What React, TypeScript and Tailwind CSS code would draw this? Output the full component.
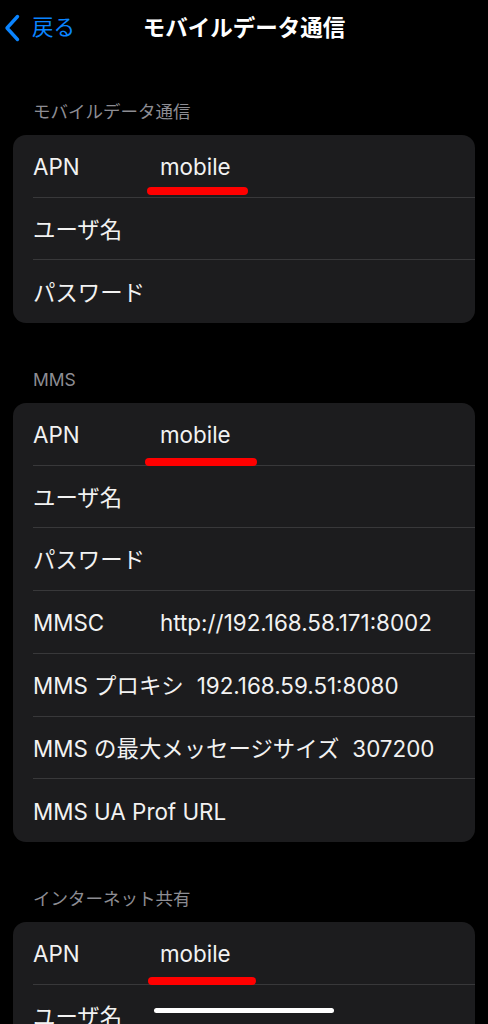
const font = { fontFamily: 'Inter, "Noto Sans CJK JP", sans-serif' };

type Row = { label: string; value?: string; mark?: { left: number; top: number; width: number } };

const Mark = ({ left, top, width }: { left: number; top: number; width: number }) => (
  <span
    className="absolute h-[8px] rounded-full bg-[#ff0000]"
    style={{ left, top, width }}
  />
);

const Section = ({ title, rows }: { title: string; rows: Row[] }) => (
  <section className="mt-[47px]">
    <h2 className="px-[33px] text-[17.5px] leading-[20px] text-[#8d8d93] mb-[13px]">{title}</h2>
    <div className="mx-[13px] rounded-[13px] bg-[#1c1c1e]">
      {rows.map((r, i) => (
        <div
          key={i}
          className={`relative ml-[20px] flex h-[62.7px] items-center pt-[2px] text-[22.4px] text-[#f2f2f2] ${
            i < rows.length - 1 ? "border-b border-[#38383a]" : ""
          }`}
        >
          <span className="min-w-[114px] whitespace-nowrap">{r.label}</span>
          {r.value && <span className="ml-[13px] whitespace-nowrap">{r.value}</span>}
          {r.mark && <Mark {...r.mark} />}
        </div>
      ))}
    </div>
  </section>
);

const App = () => {
  return (
    <div className="relative h-[1024px] w-[488px] overflow-hidden bg-black" style={font}>
      {/* nav bar */}
      <header className="relative flex h-[55px] items-center">
        <div className="flex items-center pl-[4px] text-[#0a84ff]">
          <svg width="16" height="28" viewBox="0 0 16 28" fill="none" className="mt-[1px]">
            <path d="M13.5 2.5 L3 14 L13.5 25.5" stroke="currentColor" strokeWidth="3.4" strokeLinecap="round" strokeLinejoin="round" />
          </svg>
          <span className="ml-[12px] text-[21.5px]">戻る</span>
        </div>
        <h1 className="absolute left-1/2 -translate-x-1/2 text-[22.5px] font-semibold text-white whitespace-nowrap">
          モバイルデータ通信
        </h1>
      </header>

      <Section
        title="モバイルデータ通信"
        rows={[
          { label: "APN", value: "mobile", mark: { left: 114, top: 52, width: 101 } },
          { label: "ユーザ名" },
          { label: "パスワード" },
        ]}
      />
      <Section
        title="MMS"
        rows={[
          { label: "APN", value: "mobile", mark: { left: 112, top: 55, width: 112 } },
          { label: "ユーザ名" },
          { label: "パスワード" },
          { label: "MMSC", value: "http://192.168.58.171:8002" },
          { label: "MMS プロキシ", value: "192.168.59.51:8080" },
          { label: "MMS の最大メッセージサイズ", value: "307200" },
          { label: "MMS UA Prof URL" },
        ]}
      />
      <Section
        title="インターネット共有"
        rows={[
          { label: "APN", value: "mobile", mark: { left: 115, top: 55, width: 108 } },
          { label: "ユーザ名" },
          { label: "パスワード" },
        ]}
      />

      {/* home indicator */}
      <div className="absolute bottom-[11px] left-[154px] h-[5px] w-[180px] rounded-full bg-white" />
    </div>
  );
};

export default App;
